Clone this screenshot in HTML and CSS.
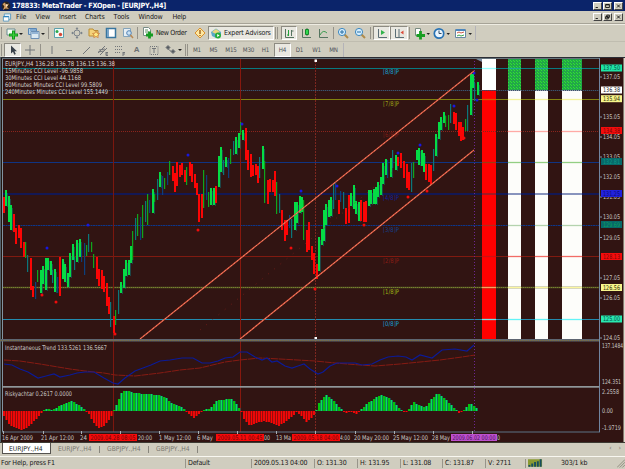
FILE: index.html
```html
<!DOCTYPE html>
<html lang="en">
<head>
<meta charset="utf-8">
<title>MetaTrader</title>
<link rel="stylesheet" href="styles.css">
</head>
<body>
<header class="titlebar">
  <svg class="logo" viewBox="0 0 10 10"><circle cx="5" cy="5" r="4.4" fill="#2c241e"/><path d="M1.5 3L4 1.5 5 4 8 2.5 6 6 8 8 4.5 7.5 2 9 3.4 5.5z" fill="#d5a067"/><path d="M5 3l2 1-2 2z" fill="#f4e6c8"/></svg>
  <h1>178833: MetaTrader - FXOpen - [EURJPY.,H4]</h1>
  <div class="winbtns">
    <button><svg viewBox="0 0 9 8"><path d="M2 6h3" /></svg></button><button><svg viewBox="0 0 9 8"><path d="M2 2h5v4H2zM2 2.5h5" /></svg></button><button class="gap"><svg viewBox="0 0 9 8"><path d="M2.5 2l4 4M6.500 2l-4 4"/></svg></button>
  </div>
</header>
<nav class="menubar">
  <svg class="menuicon" viewBox="0 0 10 10"><path d="M2 1h7v6H2z" fill="#e8f4fc" stroke="#5a9ac0"/><path d="M1 4h6v5H1z" fill="#fff" stroke="#5a9ac0"/><path d="M1 4h6" stroke="#2f86c0" stroke-width="1.4"/></svg>
  <span>File</span><span>View</span><span>Insert</span><span>Charts</span><span>Tools</span><span>Window</span><span>Help</span>
  <div class="winbtns">
    <button><svg viewBox="0 0 9 8"><path d="M2 6h3"/></svg></button><button><svg viewBox="0 0 9 8"><path d="M3.500 1.500h3.500v3H3.500zM2 3.500h3.500v3H2z"/></svg></button><button class="gap"><svg viewBox="0 0 9 8"><path d="M2.500 2l4 4M6.500 2l-4 4"/></svg></button>
  </div>
</nav>
<div class="toolbar main">
  <i class="grip"></i>
  <b class="tool"><svg class="wide" viewBox="0 0 18 13"><path d="M2 2h8v6H2z" fill="#f4fff4" stroke="#6a8a90"/><path d="M8.500 3.500v9M4 8h9" stroke="#149a1c" stroke-width="3"/><path d="M8.500 4.500v7M5 8h7" stroke="#3fd23d"/><path d="M14 6h4l-2 2z" fill="#222"/></svg></b>
  <b class="tool"><svg class="wide" viewBox="0 0 18 13"><path d="M1.500 1.500h8v6h-8z" fill="#b8d4e8" stroke="#5a86b4"/><path d="M4 4.500h8v7H4z" fill="#dbe9f2" stroke="#6b8fb5"/><path d="M3 3h6M5 6h6" stroke="#4d80b8"/><path d="M14 6h4l-2 2z" fill="#222"/></svg></b>
  <i class="sep"></i>
  <b class="tool"><svg viewBox="0 0 12 12"><path d="M1.500 1.500h9v9h-9z" fill="#f3fbf8" stroke="#5ba1ad"/><circle cx="4" cy="4.500" r="1.500" fill="#2fa84a"/><circle cx="7.500" cy="7.500" r="1.700" fill="#d84934"/></svg></b>
  <b class="tool"><svg viewBox="0 0 12 12"><path d="M6 1v10M1 6h10" stroke="#8d949a"/><circle cx="6" cy="6" r="3" fill="#d0cdbf" stroke="#7b838b"/><path d="M4.500 1.800L6 .3l1.500 1.500zM4.500 10.200L6 11.700l1.500-1.500zM1.800 4.500L.3 6l1.500 1.500zM10.200 4.500L11.700 6l-1.500 1.500z" fill="#6c7680"/></svg></b>
  <b class="tool"><svg viewBox="0 0 12 12"><path d="M1 2h4l1 1.500h4V9H1z" fill="#f4d27a" stroke="#b98c35"/><path d="M8 4l1.100 2.200 2.400.300-1.700 1.700.400 2.400L8 9.500l-2.200 1.100.400-2.400-1.700-1.700 2.400-.300z" fill="#ffe880" stroke="#cd7c37" stroke-width=".8"/></svg></b>
  <b class="tool"><svg viewBox="0 0 12 12"><path d="M1.500 1.500h9v9h-9z" fill="#fff" stroke="#38769f" stroke-width="1.500"/><path d="M2 2h2v8H2z" fill="#78a4c8"/></svg></b>
  <b class="tool"><svg viewBox="0 0 12 12"><path d="M1.500 1.500h7v8h-7z" fill="#e6eef4" stroke="#84a4bb"/><circle cx="7" cy="6" r="2.300" fill="#cbe3f5" stroke="#5182b5"/><path d="M8.500 8l2.500 3" stroke="#b88955" stroke-width="1.500"/></svg></b>
  <i class="sep"></i>
  <b class="tool text order"><svg viewBox="0 0 12 12"><path d="M1.500.500h5l2 2v6h-7z" fill="#fff" stroke="#788c87"/><path d="M3 3h3M3 5h4" stroke="#629066"/><path d="M7.500 4.500v7M4 8h7" stroke="#159b21" stroke-width="2.800"/></svg><span>New Order</span></b>
  <b class="tool"><svg viewBox="0 0 12 12"><path d="M6 1l5 5-5 5-5-5z" fill="#ffe8a0" stroke="#d9902e"/><path d="M6 3v4M6 8v1" stroke="#9d6019" stroke-width="1.400"/></svg></b>
  <b class="tool text on experts"><svg viewBox="0 0 12 12"><path d="M1 5l5-3.500L11 5v3l-5 3-4-2z" fill="#5aa8c6"/><path d="M2 5l4-3 4 3-4 2z" fill="#ecd57c"/><circle cx="8" cy="8.500" r="3" fill="#25ad39"/><path d="M7.200 7v3l2.400-1.500z" fill="#fff"/></svg><span>Expert Advisors</span></b>
  <i class="sep dbl"></i>
  <b class="tool on"><svg viewBox="0 0 12 12"><path d="M2.500 2v8.500H11M8.500 3v6M8.500 4h2" stroke="#567460" fill="none"/><path d="M5.500 3v6M4 8h1.500" stroke="#24a23c"/></svg></b>
  <b class="tool"><svg viewBox="0 0 12 12"><path d="M2.500 2v8.500H11M7 1v8" stroke="#567460" fill="none"/><path d="M5.500 2.500h3v5h-3z" fill="#30d94d" stroke="#16862b"/></svg></b>
  <b class="tool"><svg viewBox="0 0 12 12"><path d="M2.500 2v8.500H11" stroke="#567460" fill="none"/><path d="M3 8q3-6 7-2" stroke="#3b9b50" fill="none"/></svg></b>
  <i class="sep"></i>
  <b class="tool"><svg viewBox="0 0 12 12"><path d="M7.500 7.500L11 11" stroke="#b08b4a" stroke-width="2"/><circle cx="5" cy="5" r="3.600" fill="#d6efff" stroke="#3e88bf"/><path d="M5 3v4M3 5h4" stroke="#276fa5"/></svg></b>
  <b class="tool"><svg viewBox="0 0 12 12"><path d="M7.500 7.500L11 11" stroke="#b08b4a" stroke-width="2"/><circle cx="5" cy="5" r="3.600" fill="#d6efff" stroke="#3e88bf"/><path d="M3 5h4" stroke="#276fa5"/></svg></b>
  <i class="sep"></i>
  <b class="tool on"><svg viewBox="0 0 12 12"><path d="M2.500 2v8.500H11" stroke="#5b6e76" fill="none"/><path d="M5 3v5l4-2.500z" fill="#32b44c"/></svg></b>
  <b class="tool on"><svg viewBox="0 0 12 12"><path d="M2.500 2v8.500H11M6 2v8" stroke="#5b6e76" fill="none"/><path d="M10.500 3.500v4l-3-2z" fill="#dc4b3a"/></svg></b>
  <i class="sep"></i>
  <b class="tool"><svg class="wide" viewBox="0 0 18 13"><path d="M3.500 1.500h5v7h-5z" fill="#fff" stroke="#788b80"/><path d="M8.500 4v8.500M4.500 8.500H13" stroke="#189e23" stroke-width="2.800"/><path d="M14.500 6h3.500l-1.800 2z" fill="#222"/></svg></b>
  <b class="tool"><svg class="wide" viewBox="0 0 18 13"><circle cx="7" cy="6.500" r="4.700" fill="#eaf6ff" stroke="#2772b4" stroke-width="1.700"/><path d="M7 3.500v3h2.500" fill="none" stroke="#314c66"/><path d="M14.500 6h3.500l-1.800 2z" fill="#222"/></svg></b>
  <b class="tool"><svg class="wide" viewBox="0 0 18 13"><path d="M1.500 2.500h10v8h-10z" fill="#fff" stroke="#6888a4"/><path d="M2 3h9" stroke="#4d87bd" stroke-width="2"/><path d="M3 6l2-1 2 1 3-1" fill="none" stroke="#cb5b49"/><path d="M3 9l2-1 2 1 3-1" fill="none" stroke="#3ca34d"/><path d="M14.500 6h3.500l-1.800 2z" fill="#222"/></svg></b>
  <i class="sep end"></i>
</div>
<div class="toolbar draw">
  <i class="grip"></i>
  <b class="tool on"><svg viewBox="0 0 12 12"><path d="M4 1.500v8l2-1.800 1.300 3 1.500-.700-1.300-2.800H10z" fill="#39414a"/></svg></b>
  <b class="tool"><svg viewBox="0 0 12 12"><path d="M6 1v10M1 6h10"/></svg></b>
  <i class="sep"></i>
  <b class="tool"><svg viewBox="0 0 12 12"><path d="M6 2v8"/></svg></b>
  <b class="tool"><svg viewBox="0 0 12 12"><path d="M3 6.500h6"/></svg></b>
  <b class="tool"><svg viewBox="0 0 12 12"><path d="M3 10l7-7"/></svg></b>
  <b class="tool"><svg viewBox="0 0 12 12"><path d="M1 9l7-7M3 11l7-7M2 6l6-1M1 8l6-1M9 8v3.500M9 8.500h2M9 10h2M9 11.500h2"/></svg></b>
  <b class="tool"><svg viewBox="0 0 12 12"><path d="M1 2.500h8M1 5.500h8M1 8.500h6" stroke-dasharray="1 1"/><path d="M9 8v4M9 8.500h2M9 10h2"/></svg></b>
  <b class="tool letter">A</b>
  <b class="tool"><svg viewBox="0 0 12 12"><path d="M2 2.500h8v8H2z" stroke-dasharray="1 1"/><path d="M4 4.500h4M6 4.500V9"/></svg></b>
  <b class="tool"><svg class="wide" viewBox="0 0 18 13"><path d="M2 4.500l2-2 2 2-2 2zM7 8.500l2-2 2 2-2 2z" fill="#555b60"/><path d="M4 6l4 3"/><path d="M14 6h4l-2 2z" fill="#222" stroke="none"/></svg></b>
  <i class="sep dbl"></i>
  <b class="tool tf">M1</b><b class="tool tf">M5</b><b class="tool tf">M15</b><b class="tool tf">M30</b><b class="tool tf">H1</b><b class="tool tf on">H4</b><b class="tool tf">D1</b><b class="tool tf">W1</b><b class="tool tf">MN</b>
  <i class="sep end"></i>
</div>
<main class="workspace"><svg id="chart" viewBox="0 57 625 386"></svg></main>
<div class="tabs"><span class="active">EURJPY.,H4</span><span>EURJPY.,H4</span><span>GBPJPY.,H4</span><span>GBPJPY.,H4</span><em>‹</em><em>›</em></div>
<footer class="status">
  <span>For Help, press F1</span><span>Default</span><span>2009.05.13 04:00</span><span>O: 131.30</span><span>H: 131.95</span><span>L: 131.08</span><span>C: 131.87</span><span>V: 2711</span>
  <span><svg viewBox="0 0 16 8"><path d="M0 0h15v8H0z" fill="#8a9a32"/><path d="M1.500 8V6M4.500 8V4.500M7.500 8V3M10.500 8V2M13.500 8V0" stroke="#164f60" stroke-width="2"/></svg></span>
  <span class="kb">303/1 kb</span>
  <span class="resize"><svg viewBox="0 0 9 9"><path d="M0 9l9-9M3 9l6-6M6 9l3-3" stroke="#8a877b"/></svg></span>
</footer>
<script src="chart.js"></script>
</body>
</html>
```
FILE: styles.css
```css
* { box-sizing: border-box; }
html, body { margin: 0; }
body {
  width: 625px; height: 469px; overflow: hidden;
  display: flex; flex-direction: column;
  background: #d0cdbf; color: #181818;
  font: 7px/10px "DejaVu Sans Condensed", "DejaVu Sans", sans-serif;
  letter-spacing: -0.18px; white-space: nowrap; font-kerning: none;
}
svg { display: block; }
.titlebar { height: 11px; flex: none; display: flex; align-items: center; background: #0b246a; padding-left: 1px; color: #fff; }
.logo { width: 10px; height: 10px; }
.titlebar h1 { margin: 0 0 0 1px; font-size: 7.2px; line-height: 10px; letter-spacing: -0.25px; }
.winbtns { margin-left: auto; display: flex; padding-right: 2px; }
.winbtns button { width: 9px; height: 8px; padding: 0; border: 1px solid; border-color: #fff #444 #444 #fff; background: #d0cdbf; margin-left: 1px; }
.winbtns .gap { margin-left: 2px; }
.winbtns svg { width: 7px; height: 6px; fill: none; stroke: #111; stroke-width: 1.2; }
.menubar { height: 13px; flex: none; display: flex; align-items: center; border-bottom: 1px solid #a6a397; padding-left: 2px; }
.menuicon { width: 10px; height: 9px; margin-right: 4px; }
.menubar span:nth-of-type(1) { width: 19.500px; }
.menubar span:nth-of-type(2) { width: 23.500px; }
.menubar span:nth-of-type(3) { width: 26px; }
.menubar span:nth-of-type(4) { width: 28.500px; }
.menubar span:nth-of-type(5) { width: 25px; }
.menubar span:nth-of-type(6) { width: 34px; }

.toolbar { flex: none; display: grid; align-items: center; }
.toolbar.main {
  height: 17px; border-top: 1px solid #eeece2;
  grid-template-columns: 4px 20px 23px 3px 18px 17px 17px 17px 17px 5px 50px 17px 66px 7px 16px 17px 18px 3px 16px 18px 4px 17px 18px 3px 19px 22px 22px 3px;
}
.toolbar.draw {
  height: 16px; border-top: 1px solid #c0bdb0;
  grid-template-columns: 4px 17px 18px 4px 17px 17px 17px 17px 17px 17px 17px 22px 5px 16px 17px 18px 17px 17px 17px 17px 17px 17px 3px;
}
.tool { height: 14px; display: flex; align-items: center; justify-content: center; font-weight: normal; }
.tool svg { width: 12px; height: 12px; flex: none; }
.tool svg.wide { width: 18px; height: 13px; }
.tool.on { background: #e9e8e1; border: 1px solid; border-color: #8d8b82 #fff #fff #8d8b82; }
.draw svg { fill: none; stroke: #73767a; }
.draw .on svg { stroke: none; }
.tool.text { justify-content: flex-start; }
.order { padding-left: 1px; gap: 2px; }
.experts { padding-left: 1px; gap: 2px; }
.order span { letter-spacing: -0.36px; }
.letter { font: bold 8px "Liberation Sans", sans-serif; color: #6c6f72; }
.tf { font-size: 6.200px; color: #4e5157; }
.grip, .sep { height: 12px; width: 1px; margin-left: 1px; background: #96938a; }
.dbl { width: 3px; background: none; border: solid #96938a; border-width: 0 1px; }
.end { height: 14px; background: #b4b3b8; }

.workspace { flex: none; height: 386px; }
#chart { width: 625px; height: 386px; font: 6.4px "DejaVu Sans Condensed", "DejaVu Sans", sans-serif; letter-spacing: 0; }

.tabs { height: 14px; flex: none; display: flex; align-items: flex-start; padding-left: 2px; border-bottom: 1px solid #f8f7f0; font-size: 6.700px; letter-spacing: 0; color: #77756e; }
.tabs span { width: 49px; height: 11px; line-height: 12px; padding-left: 7px; }
.tabs span + span { background: linear-gradient(#88867d, #88867d) 100% 3px / 1px 7px no-repeat; }
.tabs .active { background: #fff; color: #222; border: 1px solid #55534e; border-top: 0; padding-left: 6px; }
.tabs em { font-style: normal; margin-left: 7px; line-height: 11px; }
.tabs span + em { margin-left: auto; }
.tabs em:last-child { margin-right: 4px; }

.status { height: 12px; flex: none; display: grid; align-items: center; grid-template-columns: 185px 66px 63px 43px 43px 42px 43px 40px 34px 56px 1fr; }
.status span { border-left: 1px solid #98958a; height: 9px; line-height: 9px; padding-left: 2px; }
.status span:first-child, .status .kb, .status .resize { border: 0; }
.status span:first-child { padding-left: 1px; }
.status svg { width: 15px; height: 8px; }
.status .kb { padding-left: 2px; }
.status .resize { padding: 0; justify-self: end; }
.status .resize svg { width: 8px; height: 9px; }
```
FILE: chart.js
```js
const svg = document.getElementById('chart');
const NS = 'http://www.w3.org/2000/svg';
function add(tag, attrs, text) {
  const el = document.createElementNS(NS, tag);
  for (const k in attrs) el.setAttribute(k, attrs[k]);
  if (text !== undefined) el.textContent = text;
  svg.appendChild(el);
  return el;
}
const rect = (x, y, w, h, fill) => add('rect', { x, y, width: w, height: h, fill });
const line = (x1, y1, x2, y2, stroke, w = 1, dash = '') =>
  add('line', { x1, y1, x2, y2, stroke, 'stroke-width': w, 'stroke-dasharray': dash });
const label = (x, y, text, width, fill) =>
  add('text', { x, y, fill, textLength: width, lengthAdjust: 'spacingAndGlyphs' }, text);

// Frame and panes
rect(0, 57, 625, 386, '#311412');
rect(0, 56.500, 625, 1.500, '#2b2d35');
rect(0, 57, 1, 386, '#53606b');
rect(1, 58, 1, 384, '#22160f');
rect(623.500, 58, 1.500, 385, '#dcd9cc');
rect(0, 442, 625, 1, '#3c3932');

// Period columns
const defs = add('defs', {});
defs.innerHTML = '<pattern id="mesh" width="3" height="3" patternUnits="userSpaceOnUse"><rect width="3" height="3" fill="#1fae40"/><rect width="1" height="1" fill="#35d63d"/><rect x="1" y="1" width="1" height="1" fill="#35d63d"/><rect x="2" y="2" width="1" height="1" fill="#2a9560"/></pattern>';
for (const [x, w, top, low] of [[482, 14, '#fff', '#f00'], [508, 13, 'url(#mesh)', '#fdfdfa'], [535, 13, 'url(#mesh)', '#fdfdfa'], [562, 20, 'url(#mesh)', '#fdfdfa']]) {
  rect(x, 59, w, 31, top);
  rect(x, 90, w, 249, low);
}

// Horizontal levels
line(3, 68.500, 600, 68.500, '#087a80', 1.200);
line(3, 90.500, 600, 90.500, '#4d6482', 1, '1 1');
line(3, 90.500, 600, 90.500, '#2d4058', 0.500);
line(3, 99.500, 600, 99.500, '#81820f');
line(3, 131.500, 600, 131.500, '#8a241c', 1, '1 1');
line(3, 162.500, 600, 162.500, '#103482');
line(3, 194, 600, 194, '#0a1a6c', 1.300);
line(3, 225.500, 600, 225.500, '#0c3689', 1, '2 .5');
line(3, 256.500, 600, 256.500, '#801a10');
line(3, 287.500, 600, 287.500, '#565a26', 1.400);
line(3, 287.500, 600, 287.500, '#7a802e', 1, '1 1');
line(3, 319.500, 600, 319.500, '#238bae');
for (const [x, w] of [[482, 14], [508, 13], [535, 13], [562, 20]]) {
  const onRed = x === 482;
  const tints = onRed
    ? [[68.500, '#9ff'], [99.500, '#d65a00'], [162.500, '#a03a10'], [194, '#a51822'], [225.500, '#b52a18'], [256.500, '#c11'], [287.500, '#f5a060'], [319.500, '#7be0e0']]
    : [[68.500, '#1dab8f'], [99.500, '#f4f39a'], [131.500, '#ffaaa5'], [162.500, '#93cf83'], [194, '#8894bd'], [225.500, '#b4d3ae'], [256.500, '#f26c66'], [287.500, '#fbf7a0'], [319.500, '#64f4f8']];
  for (const [y, c] of tints) line(x, y, x + w, y, c, y === 194 ? 2 : 1.300);
}

// Vertical markers
line(113.500, 58, 113.500, 432, '#7c170e');
line(240.500, 58, 240.500, 432, '#86180e');
line(315.500, 58, 315.500, 432, '#7c2720', 1, '2 1');
line(474.500, 58, 474.500, 432, '#6d2792', 1, '1 2');

for (const [n, y, c] of [[8, 74, '#14a0d0'], [7, 105.500, '#9a9f16'], [6, 137, '#7c1d16'], [4, 200, '#10209b'], [3, 231.500, '#12408b'], [2, 263, '#8a1d15'], [1, 294, '#9db215'], [0, 326, '#149ed0']])
  label(383, y, `[${n}/8]P`, 16, c);

// Price bars: x, high, low, colour key
const bars = `3.5 197 213 r,5.7 190 206 g,8 196 222 g,10.5 205 230 g,13 214 232 r,15.5 228 244 r,18 225 238 r,20.5 228 248 r,23 242 257 r,25.3 242 258 d,27.5 255 272 t,30 258 290 r,32.7 286 297 r,35 282 299 b,37.5 270 282 d,40 270 293 g,42.5 266 284 g,45 258 290 g,47.5 258 270 g,50 261 275 g,52.5 270 283 t,54.5 269 292 g,57 277 293 b,59.5 257 296 r,62 259 279 g,64.5 264 282 g,67 273 287 g,69.5 253 277 g,72 244 260 g,74.5 257 270 t,76.5 240 262 g,79 239 257 g,81.5 250 262 b,84 243 275 b,86.5 245 256 d,88.5 234 252 t,91 242 252 d,93.5 254 268 d,96 257 279 r,98.7 269 286 r,101 270 289 r,103.5 276 292 r,106 283 306 r,108 297 314 r,110.5 302 327 t,113 316 333 r,115.5 310 325 d,118 290 314 t,120.5 282 293 g,123 269 288 g,125.5 260 276 g,128 260 275 g,130 246 263 g,132.5 231 260 d,135 218 240 t,137.5 214 236 d,140 217 240 b,142.5 205 238 d,145 201 222 t,147.5 194 225 d,149.7 200 213 b,152 189 213 g,154.5 194 202 d,157 179 200 t,159.5 172 187 g,162 176 195 b,164.5 178 189 d,167 172 185 b,169.5 161 175 d,172 166 181 r,174.3 173 192 r,176.7 162 186 r,179 165 177 r,181.5 163 175 r,184 170 182 r,186.5 167 185 d,189 162 176 r,191.5 164 182 r,194 174 188 r,196 183 195 r,198.7 194 222 r,201 194 218 r,203.7 170 208 d,206 175 200 b,208.5 192 207 d,210.7 188 205 g,213 188 205 g,215.7 186 203 r,218 156 187 g,220.5 147 172 g,223 160 175 t,225.5 157 167 g,228 158 178 b,230.5 149 164 d,233 141 155 t,235.5 137 154 g,238 133 148 g,240.3 122 135 d,242.5 130 140 g,245 128 160 r,247.5 150 170 r,250 154 177 r,252.5 165 176 r,255 164 175 r,257.5 166 183 r,259.5 157 178 t,262 146 169 g,264.7 161 203 d,267 180 204 r,269.5 179 192 r,272 180 192 r,274.3 171 196 r,276.7 182 214 d,279 194 213 t,281.7 210 230 r,284 220 241 r,286.5 220 235 r,289 215 228 b,291.5 219 238 t,294 202 230 g,296.5 202 223 g,299 196 213 g,301.5 197 212 g,303.5 200 240 d,306.5 230 252 r,308.5 222 250 r,311 246 260 r,313.5 253 274 r,316 264 279 r,318.3 237 271 g,321 229 245 g,323 210 241 g,325.5 204 225 g,328 200 217 g,330.5 197 216 g,333 183 209 t,335.5 182 200 b,338 200 214 r,340.5 191 202 b,343 192 209 t,345.5 208 224 r,348 195 223 r,350.5 193 206 g,353 185 209 g,355.5 201 214 g,358 202 221 g,360.5 200 221 r,363 202 222 r,365.5 201 222 r,368 190 206 g,370 190 204 g,373 189 204 g,375 187 204 g,377.5 182 197 g,380 177 195 g,382.5 163 184 g,385 159 175 g,387.5 160 178 b,390 158 177 g,392 150 168 t,395 155 170 g,397.5 157 166 r,400 153 168 r,403.5 161 178 r,406 164 188 r,408.5 172 190 r,411 163 192 t,413.5 162 178 d,416 150 160 g,418.5 148 165 g,421 150 166 g,423 153 172 g,425.5 164 180 r,428 164 182 r,430.5 165 184 r,433 149 171 t,435.5 134 156 g,438 122 139 g,440.5 117 130 g,443 112 123 g,445.5 116 127 d,448 115 130 d,450.5 104 123 t,453 112 124 r,455.5 113 130 r,458 122 136 r,460.5 122 141 r,462.5 127 140 r,465 119 131 d,467.5 105 131 t,470 74 115 g,472.5 74 88 g,474.8 83 101 t,477 82 95 g`;
const paint = { r: '#fb0505', g: '#05dc45', d: '#10a51c', t: '#0b767b', b: '#0c3f7c' };
for (const item of bars.split(',')) {
  const [x, hi, lo, k] = item.split(' ');
  const thin = 'dtb'.includes(k);
  rect(Math.round(x - 0.500), +hi, thin ? 1.200 : 2, lo - hi, paint[k]);
  if (k === 'g') rect(Math.round(x - 0.500) + 2, +hi + 3, 0.500, lo - hi - 2, paint.t);
}

// Fractals
const dot = (x, y, c) => add('circle', { cx: x, cy: y, r: 1.500, fill: c });
for (const [x, y] of [[188, 155], [88, 225], [47, 248], [242, 124], [301, 191], [337, 186], [398, 153], [420, 145], [454, 106], [474, 73], [477, 100]]) dot(x, y, '#1818e0');
for (const [x, y] of [[198, 230], [56, 302], [42, 295], [115, 334], [291, 248], [315, 289], [364, 225], [408, 197], [427, 191], [464, 138]]) dot(x, y, '#f00c0c');

// Channel
line(140, 339, 474, 71, '#e0583f', 1.300);
line(240, 339, 474, 150, '#e0583f', 1.300);
line(140, 339, 474, 71, '#f59a80', 0.700, '2 2');
line(240, 339, 474, 150, '#f59a80', 0.700, '2 2');
line(200, 330, 395, 170, '#7b1d18', 0.800, '1 7');
rect(314.500, 59.500, 2.500, 2.500, '#fff');
rect(314.500, 337, 2.500, 2.500, '#fff');
add('path', { d: 'M476 59h6v3z', fill: '#7b8da2' });

// Trend pane
const curve = (points, stroke, w, dash = '') =>
  add('polyline', { points, fill: 'none', stroke, 'stroke-width': w, 'stroke-dasharray': dash });
curve('4,360 20,361 40,364 70,369 85,371 104,373 115,375 135,376 160,373 180,370 200,368 225,362 240,360 260,358 280,359 315,361 335,363 360,365 375,366 400,364 420,362 440,360 462,357 475,355', '#861b12', 1, '7 .7');
curve('4,364 12,365 20,369 28,372 38,378 46,376 54,374 60,377 70,375 77,373 85,372 94,372 104,378 113,383 118,384 125,378 135,371 143,368 151,365 160,361 170,360 182,358 193,358 202,363 210,363 218,361 225,358 233,357 240,352 247,352 255,357 262,360 267,358 272,362 277,361 285,366 292,368 298,366 304,364 310,369 318,374 323,372 330,366 337,363 355,363 362,365 372,364 380,360 388,357 398,356 406,357 412,360 420,355 432,358 442,350 455,349 467,351 474,345', '#0b1b98', 1.200);

// Histogram
const env = [[3,-5],[8,-13],[13,-16],[20,-19],[25,-17],[30,-13],[37,-6],[42,0],[45,2.5],[52,1],[58,5],[65,8],[70,10],[78,6],[85,0],[88,-3],[92,-11],[98,-17],[104,-14],[110,-6],[113,0],[116,7],[120,17],[124,21],[132,18],[145,17],[158,16],[165,13],[172,7],[180,4],[186,-1],[193,-7],[199,-2],[204,1],[210,3],[216,11],[231,12],[237,5],[240,0],[243,-8],[249,-15],[256,-12],[262,-10],[271,-12],[278,-15],[284,-11],[290,-6],[296,-1],[300,-4],[305,-11],[311,-7],[315,0],[318,8],[325,16],[331,12],[337,5],[342,0],[345,-2],[350,-1],[356,-3],[361,2],[367,8],[379,16],[388,13],[395,7],[400,1],[404,-2],[407,1],[413,9],[419,5],[425,4],[430,11],[437,18],[443,13],[450,6],[455,1],[458,-2],[463,1],[469,8],[473,5],[477,2],[480,2]];
let seg = 0;
for (let i = 0; 3 + i * 2.500 < 478; i++) {
  const x = 3 + i * 2.500;
  while (env[seg + 1][0] < x) seg++;
  const [x0, v0] = env[seg], [x1, v1] = env[seg + 1];
  const v = v0 + (v1 - v0) * (x - x0) / (x1 - x0);
  const h = Math.max(1, Math.round(Math.abs(v)));
  if (v >= 0) {
    rect(x, 411 - h, 2, h, i % 2 ? '#04e55d' : '#04c40c');
    rect(x + 2, 411 - h, 0.500, h, '#0b707a');
  } else rect(x, 411, 2, h, i % 2 ? '#ff0505' : '#ea0808');
}

// Separators and axes
line(2.500, 58, 2.500, 432, '#8193a0');
line(2, 58.500, 600, 58.500, '#65737c');
rect(0, 339, 600, 2.500, '#5e6671');
line(0, 340.500, 600, 340.500, '#806f39', 1, '1 1');
rect(2, 386, 598, 1.700, '#90979a');
line(2, 432, 600, 432, '#5c7285');
line(599.500, 58, 599.500, 432, '#7185a0');
for (const x of [3, 43, 81, 120, 159, 198, 237, 276, 315, 355, 394, 433, 472]) line(x + 0.500, 431, x + 0.500, 434, '#a9afb4');

const ink = '#c8c7c4';
[['EURJPY.,H4  136.28 136.78 136.15 136.38', 65.700, 110], ['15Minutes CCI Level -96.9858', 72.700, 78], ['30Minutes CCI Level 44.1168', 79.800, 76], ['60Minutes Minutes CCI Level 99.5809', 87, 97], ['240Minutes Minutes CCI Level 155.1449', 94.200, 103]]
  .forEach(([t, y, w]) => label(5, y, t, w, '#d5d2ce'));
label(5, 349.500, 'Instantaneous Trend 133.5261 136.5667', 102, ink);
label(5, 396, 'Riskyachtar 0.2617 0.0000', 67, ink);

// Price axis
for (const [t, y] of [['137.05', 77], ['135.05', 117], ['134.05', 137], ['133.05', 157], ['132.05', 177], ['131.05', 197], ['130.05', 217], ['129.05', 237.500], ['127.05', 278], ['126.05', 298], ['124.05', 338]]) {
  line(600, y, 602, y, '#8496a8');
  label(603, y + 2.400, t, 17, ink);
}
for (const [t, y, bg, fg] of [['137.50', 68, '#1fe3a4', '#064c47'], ['136.38', 90, '#fff', '#222'], ['135.94', 98.700, '#f7f58c', '#332f05'], ['134.38', 130.500, '#f30c0c', '#7c0606'], ['132.81', 161.500, '#07696a', '#0b9a86'], ['131.25', 193.500, '#2222dc', '#0c0c79'], ['129.69', 224.500, '#07696a', '#0da15e'], ['128.13', 256.500, '#f30c0c', '#7c0606'], ['126.56', 287.500, '#f7f58c', '#332f05'], ['125.00', 319, '#29e8af', '#064c47']]) {
  rect(601, y - 3.500, 21, 7, bg);
  label(603, y + 2.400, t, 17, fg);
}
label(602, 347.500, '137.1484', 21, ink);
label(602, 384, '124.351', 19, ink);
label(602, 394, '2.2558', 17, ink);
label(602, 413.400, '0.00', 11, ink);
label(602, 430, '-1.9719', 19, ink);

// Time axis
for (const [t, x, w] of [['16 Apr 2009', 2, 31], ['21 Apr 12:00', 41, 33], ['24', 80, 7], ['20:00', 138, 14], ['1 May 12:00', 159, 32], ['6 May', 197, 16], ['00', 264, 6], ['13 Ma', 276, 15], ['4:00', 340, 10], ['20 May 20:00', 354, 35], ['25 May 12:00', 393, 35], ['28 May', 432, 18], ['0', 497, 3]])
  label(x, 440, t, w, ink);
for (const [t, x, bg, fg] of [['2009.04.28 08:05', 89, '#f60a0a', '#6e0707'], ['2009.05.11 00:45', 216, '#f60a0a', '#6e0707'], ['2009.05.18 04:00', 292, '#f60a0a', '#6e0707'], ['2009.06.02 00:00', 451, '#bd50cf', '#4c145c']]) {
  rect(x, 434, x === 451 ? 46 : 48, 7, bg);
  label(x + 1.500, 440, t, x === 451 ? 43 : 45, fg);
}
```
